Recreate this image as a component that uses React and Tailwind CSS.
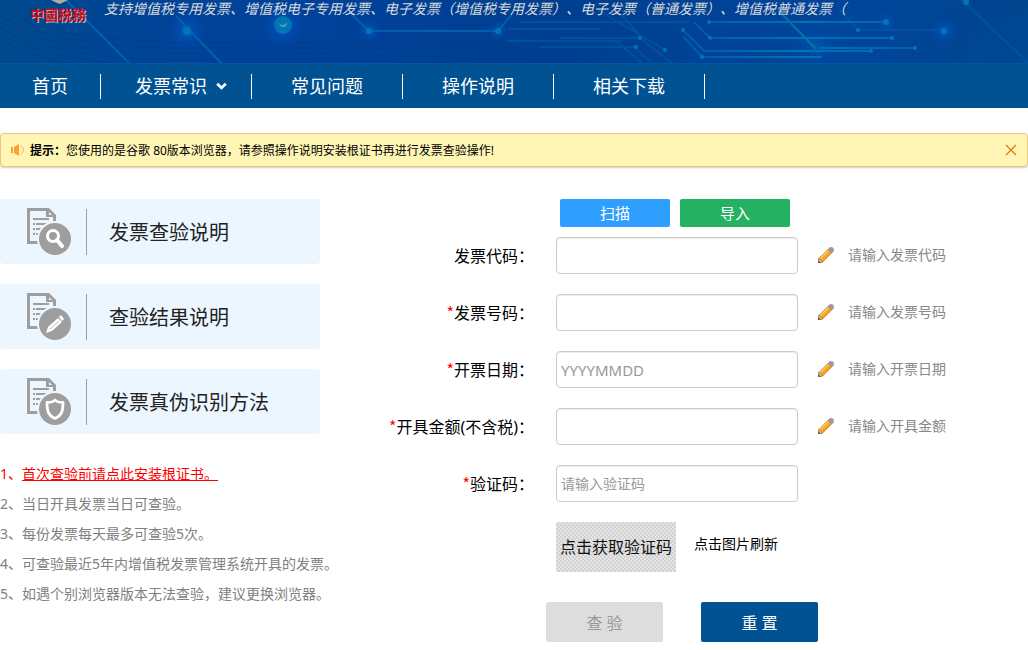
import { useState } from 'react';

const navItems = [
  { label: '首页', className: 'w-[101px]' },
  { label: '发票常识', className: 'w-[151px] pl-[10px]', hasMenu: true },
  { label: '常见问题', className: 'w-[151px]' },
  { label: '操作说明', className: 'w-[151px]' },
  { label: '相关下载', className: 'w-[151px]' },
];

const guides = [
  { label: '发票查验说明', icon: 'search' },
  { label: '查验结果说明', icon: 'pen' },
  { label: '发票真伪识别方法', icon: 'shield' },
];

const notes = [
  '2、当日开具发票当日可查验。',
  '3、每份发票每天最多可查验5次。',
  '4、可查验最近5年内增值税发票管理系统开具的发票。',
  '5、如遇个别浏览器版本无法查验，建议更换浏览器。',
];

const fields = [
  { id: 'fpdm', label: '发票代码：', hint: '请输入发票代码' },
  { id: 'fphm', label: '发票号码：', hint: '请输入发票号码', required: true },
  { id: 'kprq', label: '开票日期：', hint: '请输入开票日期', required: true, placeholder: 'YYYYMMDD' },
  { id: 'kjje', label: '开具金额(不含税)：', hint: '请输入开具金额', required: true },
  { id: 'yzm', label: '验证码：', required: true, placeholder: '请输入验证码', small: true },
];

const emptyForm = { fpdm: '', fphm: '', kprq: '', kjje: '', yzm: '' };

function CircuitBackground() {
  return (
    <svg className="absolute inset-0 w-full h-full" viewBox="0 0 1028 63" preserveAspectRatio="xMinYMin slice" aria-hidden="true">
      <defs>
        <linearGradient id="sky" x1="0" x2="1">
          <stop offset="0" stopColor="#004a8c" />
          <stop offset="0.12" stopColor="#004496" />
          <stop offset="0.3" stopColor="#00419a" />
          <stop offset="0.55" stopColor="#003f8f" />
          <stop offset="0.8" stopColor="#00459b" />
          <stop offset="1" stopColor="#004791" />
        </linearGradient>
        <radialGradient id="glow">
          <stop offset="0" stopColor="#0077c4" stopOpacity="0.7" />
          <stop offset="0.4" stopColor="#0052bf" stopOpacity="0.5" />
          <stop offset="1" stopColor="#004db8" stopOpacity="0" />
        </radialGradient>
        <linearGradient id="beam" gradientUnits="userSpaceOnUse" x1="690" x2="940" y1="0" y2="0">
          <stop offset="0" stopColor="#005aae" />
          <stop offset="0.45" stopColor="#0075ac" />
          <stop offset="1" stopColor="#005cb4" />
        </linearGradient>
      </defs>
      <rect width="1028" height="63" fill="url(#sky)" />
      {/* faint contour lines */}
      <g fill="none" stroke="#003a80" strokeWidth="1" opacity="0.4">
        {[0, 6, 12, 18, 24, 30].map((d) => (
          <path key={d} d={`M0 ${10 + d}Q60 ${44 + d} 200 ${42 + d}T520 ${48 + d}`} />
        ))}
        {[0, 7, 14, 21, 28, 35, 42, 49, 56, 63].map((d) => (
          <path key={d} d={`M${900 + d} 63Q${925 + d} 20 ${975 + d} 0`} />
        ))}
      </g>
      <g fill="url(#glow)">
        <circle cx="187" cy="31" r="20" />
        <circle cx="283" cy="26" r="24" />
        <circle cx="369" cy="31" r="12" />
        <circle cx="498" cy="31" r="10" />
        <circle cx="816" cy="46" r="26" opacity="0.6" />
        <circle cx="886" cy="22" r="10" />
        <circle cx="944" cy="31" r="14" />
      </g>
      <g fill="none" stroke="#0068b4" strokeWidth="2" opacity="0.8">
        <path d="M66 0L129 63M176 16L221 63" />
        <path d="M350 13L369 31H498L512 14" />
      </g>
      <g fill="none" stroke="#0055a5" strokeWidth="2" opacity="0.8">
        <path d="M520 22H690M508 29H600M508 41H622M540 47H634M560 38H640" />
        <path d="M598 10L665 50M615 40L642 63M634 47L652 63M640 38L672 63M622 15L642 38" />
        <path d="M840 10L858 30H944M962 0L1028 63" />
      </g>
      <g fill="none" stroke="url(#beam)" strokeWidth="2">
        <path d="M708 22H886M694 22L710 38H892M683 30L704 51H871M702 57H822M683 36L702 57M820 48H915M778 10L816 49" />
      </g>
      <g fill="#0077b4">
        <circle cx="187" cy="31" r="4" />
        <circle cx="283" cy="25" r="9" />
        <circle cx="369" cy="31" r="3" />
        <circle cx="498" cy="31" r="3" />
        <circle cx="683" cy="30" r="2" />
        <circle cx="640" cy="38" r="2" />
        <circle cx="636" cy="47" r="2" />
        <circle cx="665" cy="50" r="2" />
        <circle cx="709" cy="22" r="2" />
        <circle cx="710" cy="38" r="2" />
        <circle cx="702" cy="57" r="2" />
        <circle cx="858" cy="30" r="2" />
        <circle cx="871" cy="51" r="2" />
        <circle cx="886" cy="22" r="3" />
        <circle cx="892" cy="38" r="2" />
        <circle cx="915" cy="48" r="2" />
        <circle cx="944" cy="31" r="3" />
        <circle cx="966" cy="2" r="3" />
      </g>
      <path d="M279 23q4 5 8-1 0 5-4 5-3 0-4-4z" fill="#5a9fc8" />
      {/* tip of the emblem above the logo */}
      <path d="M51 0h17l-6 3-2 1-3-1z" fill="#b3a9a3" />
    </svg>
  );
}

function GuideIcon({ type }) {
  return (
    <svg className="w-[46px] h-[48px] shrink-0" viewBox="0 0 46 48" aria-hidden="true">
      <path d="M1 0H23L30 7V36H1Z" fill="#9e9e9f" />
      <path d="M4 3H20V9H27V33H4Z" fill="#ecf6ff" />
      <path d="M23 4l3 3h-3z" fill="#ecf6ff" />
      <g stroke="#9e9e9f" strokeWidth="2">
        <path d="M7 11H23M7 16H9M10 16H22M7 21H9M10 21H20M7 26H9M10 26H16" />
      </g>
      <circle cx="29" cy="31" r="18" fill="#ecf6ff" />
      <circle cx="29" cy="31" r="16" fill="#9e9e9f" />
      {type === 'search' && (
        <g fill="none" stroke="#fff">
          <circle cx="27" cy="28" r="5.500" strokeWidth="3" />
          <path d="M31 32l5 6" strokeWidth="4" strokeLinecap="round" />
        </g>
      )}
      {type === 'pen' && (
        <g fill="#fff">
          <path d="M20 40l2-6 10-9 4 4-10 9z" />
          <path d="M33 24l2-2 3 4-2 2z" />
          <path d="M24 36l9-8" stroke="#9e9e9f" strokeWidth="0.700" />
        </g>
      )}
      {type === 'shield' && (
        <path d="M29 22c-2 2.500-5 2.500-8 2.500 0 8 1 13 8 16 7-3 8-8 8-16-3 0-6 0-8-2.500z" fill="none" stroke="#fff" strokeWidth="2.800" strokeLinejoin="round" />
      )}
    </svg>
  );
}

function PencilIcon() {
  return (
    <svg className="size-4 shrink-0" viewBox="0 0 16 16" aria-hidden="true">
      <path d="M0.500 15.500L1 11.500 10.500 2 14 5.500 4.500 15z" fill="#fba31f" stroke="#a5691c" strokeWidth="0.800" />
      <path d="M2.500 11.500L10.500 3.500" stroke="#ffd06a" strokeWidth="1.300" />
      <path d="M0.500 15.500L1 11.500 4.500 15z" fill="#f1d3a0" stroke="#8a6232" strokeWidth="0.600" />
      <path d="M0.300 15.700l.4-2 1.600 1.600z" fill="#333" />
      <path d="M10.200 2.300l1.600-1.500 3.400 3.400-1.500 1.600z" fill="#9aa3ab" stroke="#6c757d" strokeWidth="0.500" />
      <path d="M11.800 0.800Q13.500-.3 15 1t.4 3.200z" fill="#d58fc8" stroke="#9b6a9c" strokeWidth="0.500" />
    </svg>
  );
}

function SpeakerIcon() {
  return (
    <svg className="w-[13px] h-[12px] shrink-0" viewBox="0 0 13 12" aria-hidden="true">
      <path d="M0 3h2v6H0zM3 3l5-3v12L3 9z" fill="#fd9f35" />
      <path d="M9.500 1.500Q12.500 3 12.500 6t-3 4.500" fill="none" stroke="#fdb45c" strokeWidth="1" />
    </svg>
  );
}

function Field({ field, value, onChange }) {
  return (
    <div className="grid grid-cols-[216px_242px_1fr] gap-x-5 items-center">
      <label htmlFor={field.id} className="pr-[2px] text-right text-base leading-6 text-black whitespace-nowrap">
        {field.required && <span className="font-['Noto_Sans_CJK_SC',sans-serif] text-[#ff0000]">*</span>}
        {field.label}
      </label>
      <input
        id={field.id}
        type="text"
        value={value}
        onChange={(e) => onChange(field.id, e.target.value)}
        placeholder={field.placeholder}
        className={`w-full h-[37px] px-1 rounded border border-[#ccc] bg-white shadow-[inset_0_1px_1px_rgba(0,0,0,0.075)] text-[#555] placeholder:text-[#999] ${
          field.small ? 'text-sm' : 'text-[15px]'
        }`}
      />
      {field.hint && (
        <div className="flex items-center gap-[14px] pb-[2px] text-sm text-[#888] whitespace-nowrap">
          <PencilIcon />
          <span>{field.hint}</span>
        </div>
      )}
    </div>
  );
}

export default function App() {
  const [form, setForm] = useState(emptyForm);
  const [showTip, setShowTip] = useState(true);

  const handleChange = (id, value) => setForm((prev) => ({ ...prev, [id]: value }));

  return (
    <div className="bg-white font-['Noto_Sans','Noto_Sans_CJK_SC',sans-serif]">
      <header className="relative h-[63px]">
        <CircuitBackground />
        <div className="relative flex items-start pl-[30px]">
          <span className="w-[74px] pt-[3px] text-sm leading-6 font-bold text-[#cc0a12] [text-shadow:1px_1px_0_#9db4cf] whitespace-nowrap">
            中國税務
          </span>
          <p className="text-sm leading-[18px] italic text-[#d9d9d9] whitespace-nowrap [text-spacing-trim:space-all]">
            支持增值税专用发票、增值税电子专用发票、电子发票（增值税专用发票）、电子发票（普通发票）、增值税普通发票（
          </p>
        </div>
      </header>

      <nav className="flex items-center h-[45px] border-t border-[#0057a8] bg-[#005293]">
        {navItems.map((item) => (
          <a
            key={item.label}
            href="#"
            className={`flex items-center justify-center gap-[9px] h-[25px] border-r border-white text-lg text-white whitespace-nowrap ${item.className}`}
          >
            {item.label}
            {item.hasMenu && (
              <svg className="w-[11px] h-2" viewBox="0 0 11 8" aria-hidden="true">
                <path d="M1.200 1.700l4.300 4.200 4.300-4.200" fill="none" stroke="currentColor" strokeWidth="2.800" />
              </svg>
            )}
          </a>
        ))}
      </nav>

      {showTip && (
        <div className="flex items-center h-[34px] mt-[25px] px-[10px] rounded border border-[#e9c77b] bg-[#fff6b6] shadow-[0_1px_2px_rgba(0,0,0,0.2)]">
          <SpeakerIcon />
          <p className="flex-1 pt-px ml-[6px] text-xs text-black">
            <b>提示：</b>您使用的是谷歌 80版本浏览器，请参照操作说明安装根证书再进行发票查验操作!
          </p>
          <button type="button" aria-label="关闭" onClick={() => setShowTip(false)}>
            <svg className="size-3" viewBox="0 0 12 12" aria-hidden="true">
              <path d="M1 1l10 10M11 1L1 11" stroke="#e4761b" strokeWidth="1.300" />
            </svg>
          </button>
        </div>
      )}

      <main className="flex items-start mt-8">
        <aside className="w-80 shrink-0">
          <div className="flex flex-col gap-5">
            {guides.map((guide) => (
              <a key={guide.label} href="#" className="flex items-center h-[65px] pl-[26px] rounded bg-[#ecf6ff] text-xl text-[#222]">
                <GuideIcon type={guide.icon} />
                <span className="w-px h-[46px] ml-[14px] mr-[22px] bg-[#9e9e9f]" />
                <span className="pt-[2px]">{guide.label}</span>
              </a>
            ))}
          </div>
          <ul className="mt-[25px] text-sm leading-[30px] text-[#808080] whitespace-nowrap">
            <li className="text-[#ff0000]">
              1、<a href="#" className="underline">首次查验前请点此安装根证书。</a>
            </li>
            {notes.map((note) => (
              <li key={note}>{note}</li>
            ))}
          </ul>
        </aside>

        <form className="flex-1" onSubmit={(e) => e.preventDefault()}>
          <div className="flex gap-[10px] ml-60 mb-[10px] text-[15px] text-white">
            <button type="button" className="w-[110px] h-7 rounded-xs bg-[#2f9fff]">扫描</button>
            <button type="button" className="w-[110px] h-7 rounded-xs bg-[#24b162]">导入</button>
          </div>

          <div className="flex flex-col gap-5">
            {fields.map((field) => (
              <Field key={field.id} field={field} value={form[field.id]} onChange={handleChange} />
            ))}
          </div>

          <div className="flex items-center gap-[18px] mt-5 ml-[236px]">
            <button
              type="button"
              className="w-[120px] h-[50px] text-base text-[#111] bg-[conic-gradient(#d2d2d2_25%,#e4e4e4_0_50%,#d2d2d2_0_75%,#e4e4e4_0)] bg-size-[4px_4px]"
            >
              点击获取验证码
            </button>
            <span className="pb-[6px] text-sm text-black">点击图片刷新</span>
          </div>

          <div className="flex gap-[38px] mt-[30px] ml-[226px] text-base">
            <button type="submit" disabled className="w-[117px] h-10 pt-[2px] rounded-xs bg-[#ddd] text-[#999]">查 验</button>
            <button
              type="button"
              onClick={() => setForm(emptyForm)}
              className="w-[117px] h-10 pt-[2px] rounded-xs bg-[#005293] text-white"
            >
              重 置
            </button>
          </div>
        </form>
      </main>
    </div>
  );
}
